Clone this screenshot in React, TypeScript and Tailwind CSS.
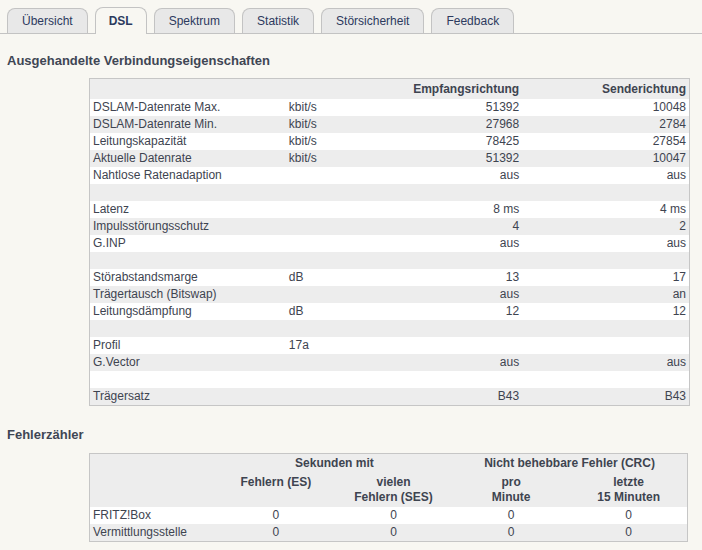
type Row = {
  label: string;
  unit?: string;
  down?: string;
  up?: string;
};

const tabs = ["Übersicht", "DSL", "Spektrum", "Statistik", "Störsicherheit", "Feedback"];

const rows: Row[] = [
  { label: "DSLAM-Datenrate Max.", unit: "kbit/s", down: "51392", up: "10048" },
  { label: "DSLAM-Datenrate Min.", unit: "kbit/s", down: "27968", up: "2784" },
  { label: "Leitungskapazität", unit: "kbit/s", down: "78425", up: "27854" },
  { label: "Aktuelle Datenrate", unit: "kbit/s", down: "51392", up: "10047" },
  { label: "Nahtlose Ratenadaption", down: "aus", up: "aus" },
  { label: "" },
  { label: "Latenz", down: "8 ms", up: "4 ms" },
  { label: "Impulsstörungsschutz", down: "4", up: "2" },
  { label: "G.INP", down: "aus", up: "aus" },
  { label: "" },
  { label: "Störabstandsmarge", unit: "dB", down: "13", up: "17" },
  { label: "Trägertausch (Bitswap)", down: "aus", up: "an" },
  { label: "Leitungsdämpfung", unit: "dB", down: "12", up: "12" },
  { label: "" },
  { label: "Profil", unit: "17a" },
  { label: "G.Vector", down: "aus", up: "aus" },
  { label: "" },
  { label: "Trägersatz", down: "B43", up: "B43" },
];

const errors = [
  { label: "FRITZ!Box", values: ["0", "0", "0", "0"] },
  { label: "Vermittlungsstelle", values: ["0", "0", "0", "0"] },
];

export default function App() {
  return (
    <div className="min-h-screen bg-[#f8f7f2] text-[#3e4450] text-[12px]" style={{ fontFamily: '"Liberation Sans", Arial, sans-serif' }}>
      <Tabs />

      <h2 className="ml-[7px] mt-[19px] text-[13px] leading-[16px] font-bold text-[#3f4654]">
        Ausgehandelte Verbindungseigenschaften
      </h2>
      <table className="ml-[89px] mt-[9px] border-collapse border border-[#c6c6c6] table-fixed w-[601px]">
        <colgroup>
          <col style={{ width: "196px" }} />
          <col style={{ width: "104px" }} />
          <col style={{ width: "132px" }} />
          <col style={{ width: "167px" }} />
        </colgroup>
        <thead>
          <tr className="bg-[#ededed] h-[19px]">
            <th />
            <th />
            <th className="text-right font-bold px-[3px] leading-[19px] pt-[1px]">Empfangsrichtung</th>
            <th className="text-right font-bold px-[3px] leading-[19px] pt-[1px]">Senderichtung</th>
          </tr>
        </thead>
        <tbody>
          {rows.map((r, i) => (
            <tr key={i} className={(i % 2 === 0 ? "bg-white" : "bg-[#ededed]") + " h-[17px]"}>
              <td className="px-[3px] leading-[17px] p-0 whitespace-nowrap">{r.label}</td>
              <td className="px-[3px] leading-[17px] p-0">{r.unit}</td>
              <td className="px-[3px] leading-[17px] p-0 text-right">{r.down}</td>
              <td className="px-[3px] leading-[17px] p-0 text-right">{r.up}</td>
            </tr>
          ))}
        </tbody>
      </table>

      <h2 className="ml-[7px] mt-[21px] text-[13px] leading-[16px] font-bold text-[#3f4654]">Fehlerzähler</h2>
      <table className="ml-[89px] mt-[10px] border-collapse border border-[#c6c6c6] table-fixed w-[599px]">
        <colgroup>
          <col style={{ width: "127px" }} />
          <col style={{ width: "118px" }} />
          <col style={{ width: "117px" }} />
          <col style={{ width: "118px" }} />
          <col style={{ width: "117px" }} />
        </colgroup>
        <thead className="bg-[#ededed] font-bold">
          <tr className="h-[19px]">
            <th />
            <th colSpan={2} className="text-center leading-[19px]">Sekunden mit</th>
            <th colSpan={2} className="text-center leading-[19px]">Nicht behebbare Fehler (CRC)</th>
          </tr>
          <tr className="h-[34px] align-top">
            <th />
            <th className="text-center leading-[15px] pt-[2px]">Fehlern (ES)</th>
            <th className="text-center leading-[15px] pt-[2px]">
              vielen
              <br />
              Fehlern (SES)
            </th>
            <th className="text-center leading-[15px] pt-[2px]">
              pro
              <br />
              Minute
            </th>
            <th className="text-center leading-[15px] pt-[2px]">
              letzte
              <br />
              15 Minuten
            </th>
          </tr>
        </thead>
        <tbody>
          {errors.map((e, i) => (
            <tr key={e.label} className={(i % 2 === 0 ? "bg-white" : "bg-[#ededed]") + " h-[17px]"}>
              <td className="px-[3px] leading-[17px]">{e.label}</td>
              {e.values.map((v, j) => (
                <td key={j} className="text-center leading-[17px]">
                  {v}
                </td>
              ))}
            </tr>
          ))}
        </tbody>
      </table>
    </div>
  );
}

function Tabs() {
  return (
    <div className="flex items-end gap-[7px] pl-[7px] pt-[7px] border-b border-[#c3c3c3] h-[34px]">
      {tabs.map((t) =>
        t === "DSL" ? (
          <div
            key={t}
            className="h-[27px] -mb-px px-[13px] rounded-t-[8px] border border-b-0 border-[#c3c3c3] bg-[#f8f7f2] font-bold text-[#2d3a5e] flex items-center justify-center"
          >
            {t}
          </div>
        ) : (
          <div
            key={t}
            className="h-[25px] px-[14px] rounded-t-[8px] border border-b-0 border-[#c3c3c3] bg-[#e8e8e8] text-[#2d3a5e] flex items-center justify-center"
          >
            {t}
          </div>
        )
      )}
    </div>
  );
}
